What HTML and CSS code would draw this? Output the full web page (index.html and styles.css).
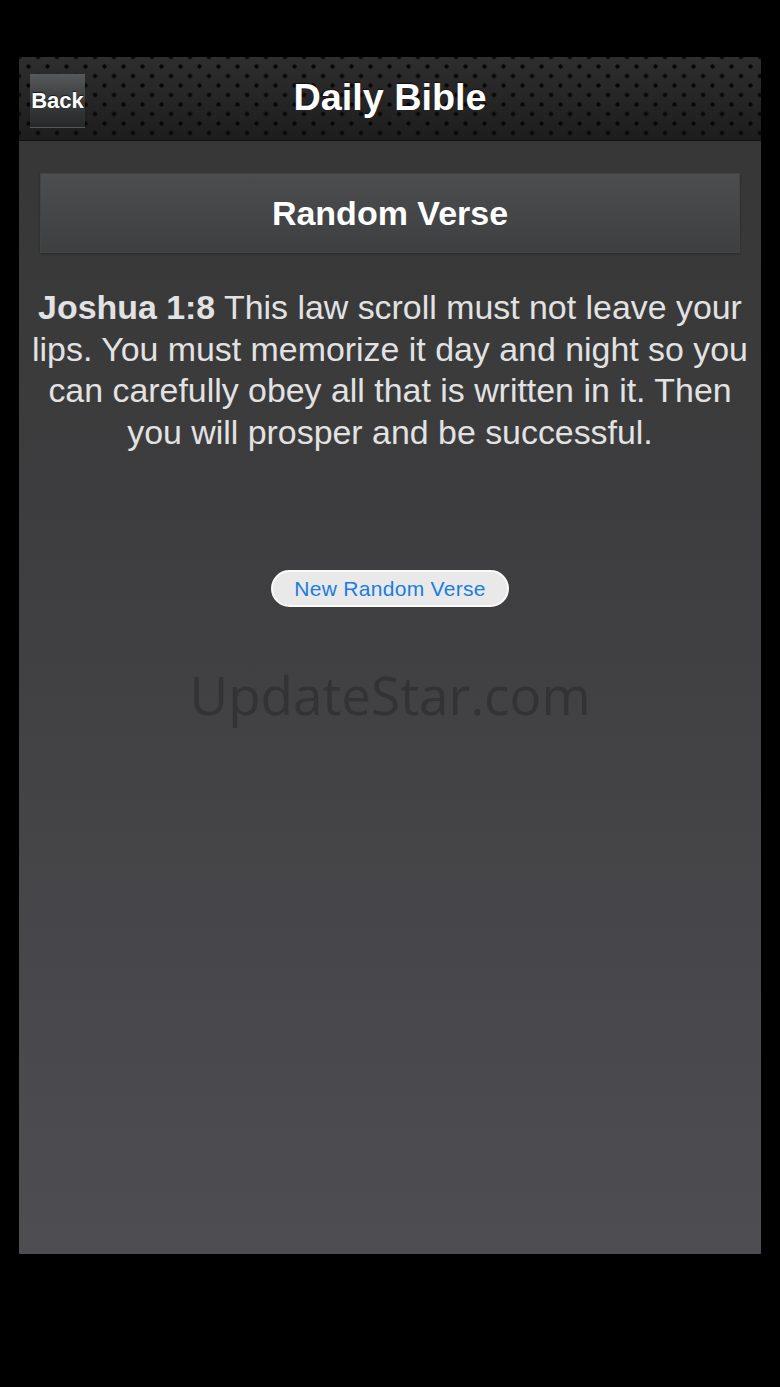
FILE: index.html
```html
<!DOCTYPE html>
<html lang="en">
<head>
  <meta charset="UTF-8" />
  <title>Daily Bible</title>
  <meta name="viewport" content="width=device-width, initial-scale=1.0" />
  <link rel="stylesheet" href="styles.css">
</head>
<body>

  <div class="screen">
    <!-- Top bar with perforated metal look -->
    <div class="navbar">
      <a href="#" class="back-btn">Back</a>
      <h1>Daily Bible</h1>
    </div>

    <div class="content">
      <div class="section-title">Random Verse</div>

      <p class="verse" id="verse"><strong>Joshua 1:8</strong> This law scroll must not leave your lips. You must memorize it day and night so you can carefully obey all that is written in it. Then you will prosper and be successful.</p>

      <div class="actions">
        <button type="button" class="btn-new">New Random Verse</button>
      </div>

      <div class="watermark">UpdateStar.com</div>
    </div>
  </div>

</body>
</html>
```

FILE: styles.css
```css
* { margin: 0; padding: 0; box-sizing: border-box; }
body {
  background: #000;
  font-family: "Liberation Sans", Arial, sans-serif;
  min-height: 100vh;
  padding: 57px 19px 0;
}
.screen {
  width: 742px;
  height: 1197px;
  display: flex;
  flex-direction: column;
  background: linear-gradient(to bottom, #353535 0%, #3f3f41 45%, #4e4d52 100%);
}

/* Perforated bar: two staggered dot grids */
.navbar {
  height: 84px;
  display: flex;
  align-items: center;
  justify-content: center;
  position: relative;
  background-color: #232323;
  background-image:
    radial-gradient(circle at 50% 50%, #080808 0, #080808 1.8px, rgba(0,0,0,0) 2.5px),
    radial-gradient(circle at 50% 50%, #080808 0, #080808 1.8px, rgba(0,0,0,0) 2.5px),
    linear-gradient(to bottom, #2e2e2e, #1d1d1d);
  background-size: 19px 19px, 19px 19px, 100% 100%;
  background-position: 0 0, 9.5px 9.5px, 0 0;
  border-bottom: 1px solid #111;
}
.navbar h1 {
  color: #fff;
  font-size: 37.8px;
  font-weight: bold;
  margin-top: -3px;
  text-shadow: 0 -1px 1px rgba(0, 0, 0, 0.6);
}
.back-btn {
  position: absolute;
  left: 11px;
  top: 17px;
  width: 55px;
  height: 54px;
  display: flex;
  align-items: center;
  justify-content: center;
  color: #fff;
  text-decoration: none;
  font-weight: bold;
  font-size: 22px;
  background: linear-gradient(to bottom, #56585a 0%, #3a3c3e 50%, #26282a 100%);
  border-bottom: 1px solid #555;
  text-shadow: 0 -1px 1px rgba(0, 0, 0, 0.6);
}

.content {
  flex: 1;
  padding: 32px 21px 0;
  display: flex;
  flex-direction: column;
}
.section-title {
  height: 80px;
  display: flex;
  align-items: center;
  justify-content: center;
  color: #fff;
  font-size: 34px;
  font-weight: bold;
  background: linear-gradient(to bottom, #4b4d4f, #3d3f40);
  border: 1px solid #444;
  box-shadow: 0 1px 2px rgba(0, 0, 0, 0.3);
}
.verse {
  margin: 34px -10px 0;
  text-align: center;
  color: #e2e2e2;
  font-size: 33.9px;
  line-height: 41.5px;
}
.actions {
  margin-top: 117px;
  display: flex;
  justify-content: center;
}
.btn-new {
  width: 238px;
  height: 37px;
  border-radius: 19px;
  border: 2px solid #fafafa;
  background: #e9e9ea;
  color: #1a7de0;
  font-family: "Liberation Sans", Arial, sans-serif;
  font-size: 21px;
  letter-spacing: 0.3px;
  cursor: pointer;
}
.watermark {
  margin-top: 53px;
  text-align: center;
  font-family: "Open Sans", "Noto Sans", sans-serif;
  font-size: 53px;
  line-height: 70px;
  color: #333335;
}
```
